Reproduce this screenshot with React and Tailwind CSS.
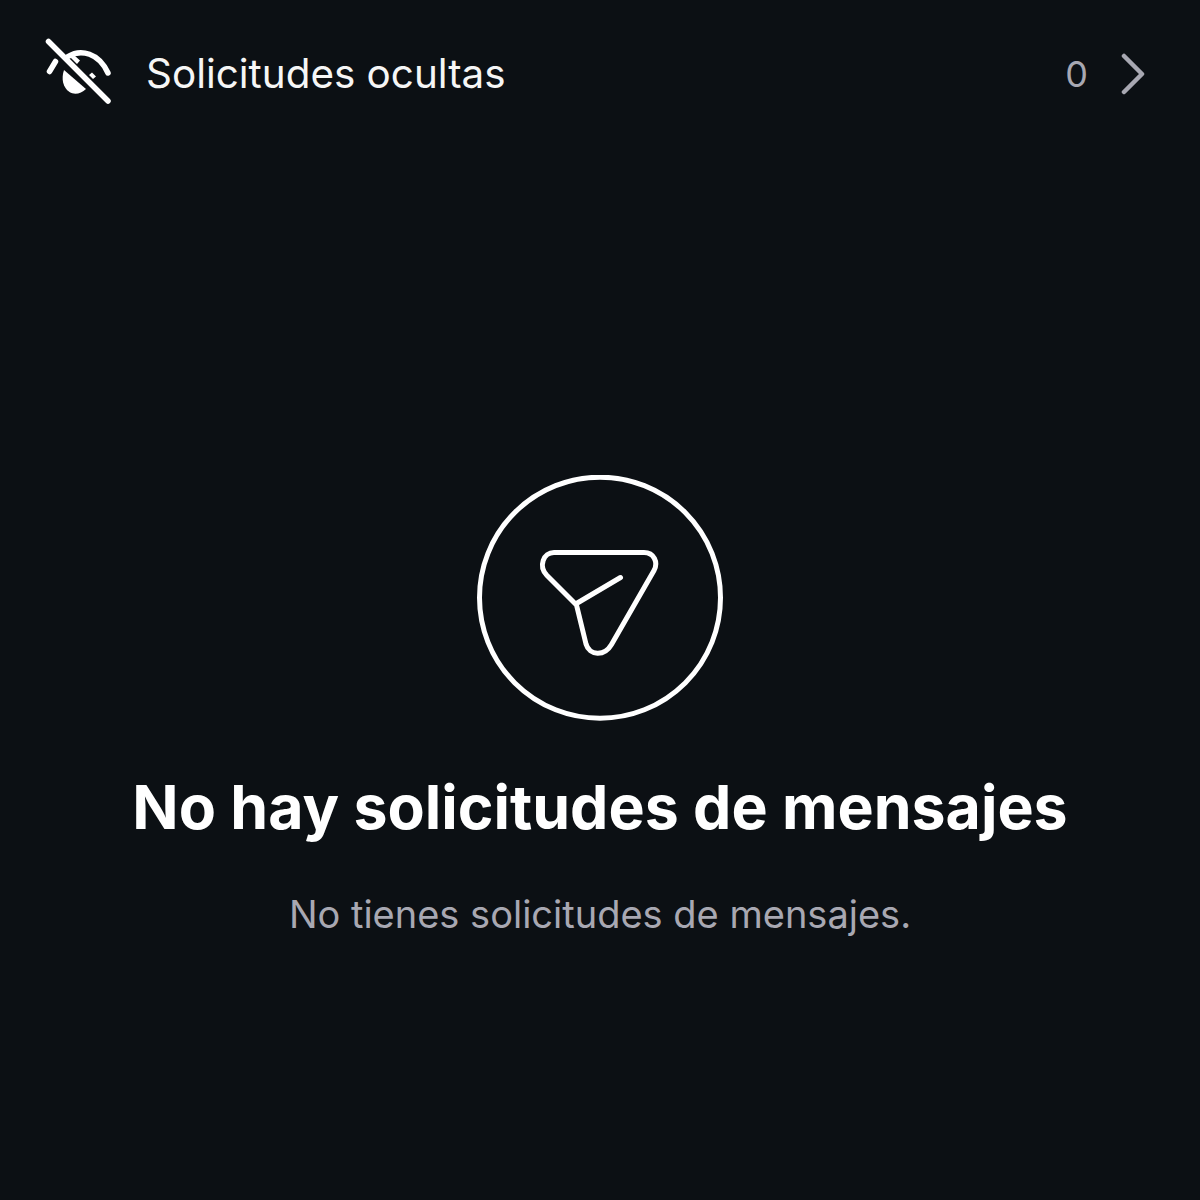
import React from 'react';

const FONT = "font-['Inter','Liberation_Sans',sans-serif]";

function HiddenEyeIcon() {
  return (
    <svg width="72" height="72" viewBox="0 0 72 72" fill="none" className="shrink-0">
      <path d="M4.5 3.5L64 63" stroke="#fff" strokeWidth="5.5" strokeLinecap="round" />
      <path d="M24 18.5C37 10.5 55 15 64 35" stroke="#fff" strokeWidth="5.5" strokeLinecap="round" />
      <path d="M11.5 23.5L5.5 33.5" stroke="#fff" strokeWidth="5.5" strokeLinecap="round" />
      <path d="M20 32L42 51C37 56 30 57 25.5 54C19 49.5 17 41 20 32Z" fill="#fff" />
      <path d="M26 19L33 26L36 22.5L30 17Z M45 37L49 41L52 38.5L48 34.5Z" fill="#fff" />
    </svg>
  );
}

function PlaneIcon() {
  return (
    <svg width="246" height="246" viewBox="0 0 246 246" fill="none">
      <circle cx="123" cy="122.7" r="120.5" stroke="#fff" strokeWidth="5" />
      <path
        d="M77 77.5H167C177 77.5 181.5 87.5 177 95.5L134.5 169.5C127.5 181.5 112.5 181 109 169L99.5 130L70 100.5C61 91 66.5 77.5 77 77.5Z"
        stroke="#fff"
        strokeWidth="5"
        strokeLinejoin="round"
      />
      <path d="M99.5 128.5L143.5 102.5" stroke="#fff" strokeWidth="5" strokeLinecap="round" />
    </svg>
  );
}

export default function App() {
  return (
    <div className={`${FONT} w-[1200px] h-[1200px] bg-[#0c1014] flex flex-col items-center overflow-hidden`}>
      {/* Hidden requests row */}
      <div className="w-full h-[148px] pl-[44px] pr-[54px] flex items-center">
        <HiddenEyeIcon />
        <span className="ml-[30px] text-[40.4px] leading-[46px] text-[#f6f6f6]">Solicitudes ocultas</span>
        <span className="ml-auto text-[36px] leading-[46px] text-[#a8a8b2]">0</span>
        <svg width="26" height="42" viewBox="0 0 26 42" fill="none" className="ml-[32px]">
          <path d="M4 3L22 21L4 39" stroke="#a8a8b2" strokeWidth="4.5" strokeLinecap="round" strokeLinejoin="round" />
        </svg>
      </div>

      {/* Empty state */}
      <div className="mt-[327px]">
        <PlaneIcon />
      </div>
      <h1 className="mt-[48px] text-[60.8px] leading-[76px] font-bold text-white whitespace-nowrap">
        No hay solicitudes de mensajes
      </h1>
      <p className="mt-[46px] text-[38px] leading-[46px] text-[#a8a8b2] whitespace-nowrap">
        No tienes solicitudes de mensajes.
      </p>
    </div>
  );
}
